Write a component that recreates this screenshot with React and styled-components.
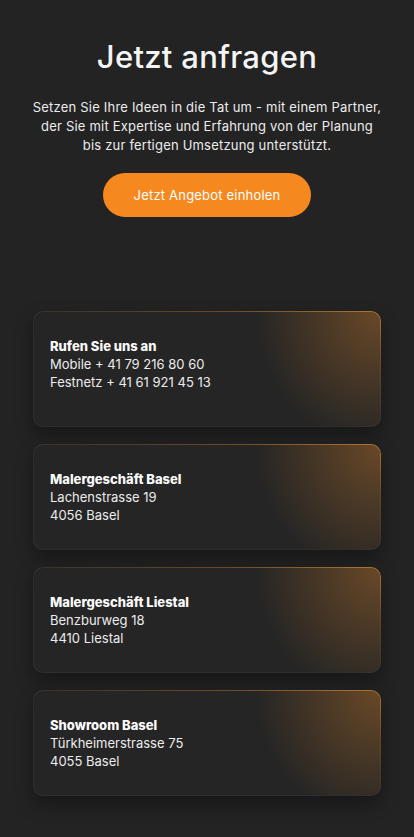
import styled, { createGlobalStyle } from "styled-components";

const GlobalStyle = createGlobalStyle`
  html, body {
    margin: 0;
    padding: 0;
    background: #232323;
  }
  body {
    font-family: "Inter", "Noto Sans", sans-serif;
    color: #f2f2f2;
  }
`;

const contacts = [
  {
    title: "Rufen Sie uns an",
    lines: ["Mobile + 41 79 216 80 60", "Festnetz + 41 61 921 45 13"],
    tall: true,
  },
  {
    title: "Malergeschäft Basel",
    lines: ["Lachenstrasse 19", "4056 Basel"],
  },
  {
    title: "Malergeschäft Liestal",
    lines: ["Benzburweg 18", "4410 Liestal"],
  },
  {
    title: "Showroom Basel",
    lines: ["Türkheimerstrasse 75", "4055 Basel"],
  },
];

const Page = styled.main`
  min-height: 837px;
  background: #232323;
  padding: 36px 0 42px;
  box-sizing: border-box;
`;

const Hero = styled.section`
  display: flex;
  flex-direction: column;
  align-items: center;
  text-align: center;
  padding: 0 16px;
`;

const Title = styled.h1`
  margin: 0;
  font-size: 31px;
  font-weight: 500;
  letter-spacing: 0.3px;
  color: #f4f4f4;
  line-height: 42px;
`;

const Lead = styled.p`
  margin: 20px 0 0;
  font-size: 13px;
  line-height: 19px;
  letter-spacing: 0.2px;
  color: #ececec;
  white-space: nowrap;
`;

const CtaButton = styled.button`
  margin-top: 18px;
  width: 208px;
  height: 44px;
  border: none;
  border-radius: 22px;
  background: #f5891f;
  color: #fff;
  font-family: inherit;
  font-size: 13px;
  letter-spacing: 0.2px;
  cursor: pointer;
`;

const CardList = styled.section`
  display: flex;
  flex-direction: column;
  gap: 17px;
  margin-top: 94px;
  padding: 0 33px;
`;

const Card = styled.article`
  min-height: ${({ $tall }) => ($tall ? "116px" : "105px")};
  box-sizing: border-box;
  padding: 25px 16px;
  border-radius: 10px;
  border: 1px solid transparent;
  background:
    radial-gradient(125px 135px at 100% 0%, rgba(150, 96, 40, 0.6), rgba(37, 37, 37, 0) 100%) padding-box,
    linear-gradient(#252525, #252525) padding-box,
    linear-gradient(to left bottom, #b07634 0%, #6a4a28 22%, #2e2e2e 55%, #2e2e2e 100%) border-box;
  box-shadow: 0 8px 18px rgba(0, 0, 0, 0.35);
`;

const CardTitle = styled.h3`
  margin: 0;
  font-size: 13px;
  font-weight: 800;
  line-height: 18px;
  color: #fafafa;
`;

const CardLine = styled.p`
  margin: 0;
  font-size: 13px;
  line-height: 18px;
  color: #ececec;
`;

export default function App() {
  return (
    <>
      <GlobalStyle />
      <Page>
        <Hero>
          <Title>Jetzt anfragen</Title>
          <Lead>
            Setzen Sie Ihre Ideen in die Tat um - mit einem Partner,
            <br />
            der Sie mit Expertise und Erfahrung von der Planung
            <br />
            bis zur fertigen Umsetzung unterstützt.
          </Lead>
          <CtaButton>Jetzt Angebot einholen</CtaButton>
        </Hero>
        <CardList>
          {contacts.map((c) => (
            <Card key={c.title} $tall={c.tall}>
              <CardTitle>{c.title}</CardTitle>
              {c.lines.map((l) => (
                <CardLine key={l}>{l}</CardLine>
              ))}
            </Card>
          ))}
        </CardList>
      </Page>
    </>
  );
}
